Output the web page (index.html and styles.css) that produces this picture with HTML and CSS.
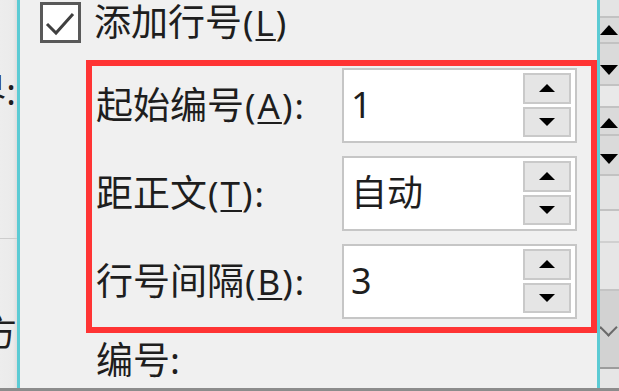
FILE: index.html
```html
<!DOCTYPE html>
<html lang="zh-CN">
<head>
<meta charset="utf-8">
<title>行号</title>
<link rel="stylesheet" href="styles.css">
</head>
<body>
<div class="screen">
  <div class="backdrop backdrop-left">
    <div class="frag frag-top"><span>距边界:</span></div>
    <div class="hline"></div>
    <div class="frag frag-bottom"><span>对齐方</span></div>
  </div>
  <div class="edge"></div>
  <div class="dialog">
    <div class="check-row">
      <svg class="checkbox" width="41" height="41" viewBox="0 0 41 41">
        <rect x="1.5" y="1.5" width="38" height="38" fill="#fff" stroke="#595959" stroke-width="3"/>
        <path d="M7 22 L16 31 L33 12" fill="none" stroke="#404040" stroke-width="3"/>
      </svg>
      <span class="check-label">添加行号<span class="lat">(<u>L</u>)</span></span>
    </div>
    <div class="highlight">
      <div class="field-row">
        <span class="field-label">起始编号<span class="lat">(<u>A</u>):</span></span>
        <div class="spin">
          <span class="spin-value">1</span>
          <div class="spin-buttons">
            <div class="spin-btn"><i class="tri-up"></i></div>
            <div class="spin-btn"><i class="tri-down"></i></div>
          </div>
        </div>
      </div>
      <div class="field-row">
        <span class="field-label">距正文<span class="lat">(<u>T</u>):</span></span>
        <div class="spin">
          <span class="spin-value">自动</span>
          <div class="spin-buttons">
            <div class="spin-btn"><i class="tri-up"></i></div>
            <div class="spin-btn"><i class="tri-down"></i></div>
          </div>
        </div>
      </div>
      <div class="field-row">
        <span class="field-label">行号间隔<span class="lat">(<u>B</u>):</span></span>
        <div class="spin">
          <span class="spin-value">3</span>
          <div class="spin-buttons">
            <div class="spin-btn"><i class="tri-up"></i></div>
            <div class="spin-btn"><i class="tri-down"></i></div>
          </div>
        </div>
      </div>
    </div>
    <div class="numbering">编号:</div>
  </div>
  <div class="edge"></div>
  <div class="backdrop backdrop-right">
    <div class="seg s-a"></div>
    <div class="seg s-btn"><i class="tri-up"></i></div>
    <div class="seg s-btn s-tall"><i class="tri-down"></i></div>
    <div class="seg s-light"></div>
    <div class="seg s-btn s-up2"><i class="tri-up"></i></div>
    <div class="seg s-btn s-tall2"><i class="tri-down"></i></div>
    <div class="seg s-b"></div>
    <div class="seg s-c"></div>
    <div class="seg s-d"></div>
    <div class="seg s-combo"><span class="chev"></span></div>
    <div class="seg s-e"></div>
  </div>
</div>
<div class="bottom-bar"></div>
</body>
</html>
```

FILE: styles.css
```css
html, body {
  margin: 0;
  padding: 0;
}
body {
  width: 619px;
  height: 391px;
  overflow: hidden;
  background: #f0f0f0;
  font-family: "Noto Sans", "Noto Sans CJK SC", sans-serif;
  color: #1e1e1e;
}
.screen {
  display: flex;
  height: 388px;
}
.bottom-bar {
  height: 3px;
  background: #8c8c8c;
}

/* backdrop dialog (left) */
.backdrop-left {
  width: 17px;
  flex: none;
  overflow: hidden;
  background: linear-gradient(to right, #ededed 0, #ebebeb 13px, #dedede 17px);
  padding-top: 70px;
  box-sizing: border-box;
}
.frag {
  display: flex;
  justify-content: flex-end;
  height: 44px;
  line-height: 44px;
  font-size: 36px;
  white-space: nowrap;
  padding-right: 1px;
}
.hline {
  height: 1px;
  background: #cdcdcd;
  margin-top: 124px;
}
.frag-bottom {
  margin-top: 72px;
  padding-right: 0;
}

.edge {
  width: 3px;
  flex: none;
  background: #5ccbd4;
}

/* main dialog */
.dialog {
  flex: none;
  width: 577px;
}
.check-row {
  display: flex;
  align-items: center;
  padding-left: 20px;
  height: 44px;
}
.checkbox {
  display: block;
  flex: none;
}
.check-label {
  margin-left: 13px;
  font-size: 37px;
  line-height: 44px;
  white-space: nowrap;
}
.lat {
  font-size: 35px;
  letter-spacing: 2px;
  margin-left: 1px;
}
u {
  text-decoration-thickness: 2px;
  text-underline-offset: 3px;
}

.highlight {
  margin: 16px 0 0 66px;
  border: 6px solid #ff3434;
  height: 273px;
  box-sizing: border-box;
  padding: 2px 14px 0 4px;
  display: grid;
  grid-template-columns: 246px 235px;
  grid-auto-rows: 75px;
  row-gap: 13px;
}
.field-row {
  display: contents;
}
.field-label {
  align-self: center;
  font-size: 37px;
  line-height: 46px;
  white-space: nowrap;
}
.spin {
  display: flex;
  background: #fff;
  border: 2px solid #c6c6c6;
  box-sizing: border-box;
}
.spin-value {
  flex: 1;
  align-self: center;
  padding-left: 7px;
  font-size: 36px;
  line-height: 46px;
  padding-bottom: 2px;
}
.spin-buttons {
  display: flex;
  flex-direction: column;
  gap: 3px;
  padding: 3px 4px 4px 0;
}
.spin-btn {
  flex: 1;
  width: 48px;
  box-sizing: border-box;
  border: 2px solid #c9c9c9;
  background: #e5e5e5;
  display: flex;
  align-items: center;
  justify-content: center;
}
.tri-up {
  width: 0;
  height: 0;
  border-left: 8px solid transparent;
  border-right: 8px solid transparent;
  border-bottom: 8px solid #000;
}
.tri-down {
  width: 0;
  height: 0;
  border-left: 8px solid transparent;
  border-right: 8px solid transparent;
  border-top: 8px solid #000;
}

.numbering {
  margin: 4px 0 0 76px;
  font-size: 37px;
  line-height: 46px;
}

/* backdrop dialog (right) */
.backdrop-right {
  flex: 1;
  overflow: hidden;
  background: #e2e2e2;
  display: flex;
  flex-direction: column;
}
.seg {
  flex: none;
  box-sizing: border-box;
  border-bottom: 2px solid #c2c2c2;
  display: flex;
  align-items: center;
  padding-left: 0;
}
.s-a { height: 18px; background: #e4e4e4; }
.s-btn { height: 26px; background: #dadada; }
.s-tall { height: 42px; align-items: flex-start; padding-top: 21px; }
.s-light { height: 22px; background: #e9e9e9; }
.s-up2 { height: 28px; align-items: flex-start; padding-top: 10px; }
.s-tall2 { height: 40px; align-items: flex-start; padding-top: 18px; }
.s-b { height: 35px; background: #e3e3e3; }
.s-c { height: 32px; background: #e7e7e7; border-bottom-color: #d0d0d0; }
.s-d { height: 48px; background: #e6e6e6; border-bottom-color: #c4c4c4; }
.s-combo { height: 78px; background: #d2d2d2; border-bottom-color: #9c9c9c; padding-top: 4px; }
.s-e { height: 30px; background: #e6e6e6; border-bottom: none; }
.chev {
  display: block;
  width: 11px;
  height: 11px;
  border-right: 2px solid #6a6a6a;
  border-bottom: 2px solid #6a6a6a;
  transform: translate(2px, -4px) rotate(45deg);
}
.backdrop-right .tri-up {
  border-left-width: 9px;
  border-right-width: 9px;
  border-bottom-width: 10px;
}
.backdrop-right .tri-down {
  border-left-width: 9px;
  border-right-width: 9px;
  border-top-width: 10px;
}
```
